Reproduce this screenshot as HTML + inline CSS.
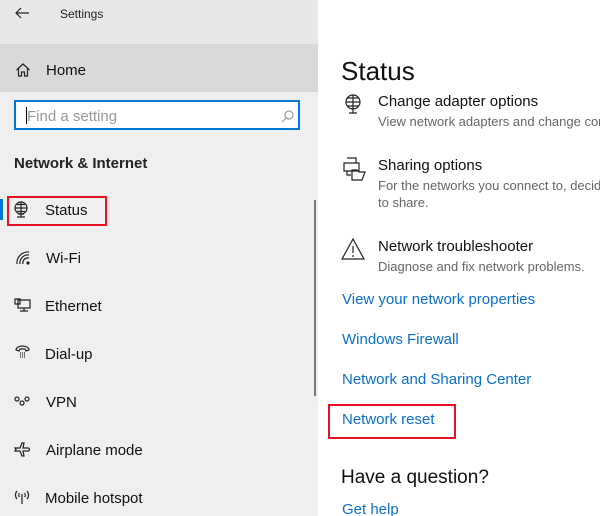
<!DOCTYPE html>
<html><head><style>
body{margin:0;width:600px;height:516px;overflow:hidden;position:relative;font-family:"Liberation Sans",sans-serif;background:#fff}
.a{position:absolute;white-space:nowrap}
#left{position:absolute;left:0;top:0;width:318px;height:516px;background:#efefef}
#right{position:absolute;left:318px;top:0;width:282px;height:516px;overflow:hidden}
.nav{font-size:15px;color:#111}
.link{font-size:15px;color:#0a6fcf}
.t{font-size:15px;color:#111}
.s{font-size:13px;color:#666}
svg{position:absolute;fill:none;stroke:#222;stroke-width:1.2}
</style></head><body>
<div id="left">
<div class="a" style="left:0;top:0;width:318px;height:44px;background:#e8e8e8"></div>
<div class="a" style="left:0;top:44px;width:318px;height:48px;background:#d9d9d9"></div>
<svg style="left:14px;top:6px" width="16" height="14"><path d="M15 7H2M7 2L2 7l5 5"/></svg>
<div class="a" style="left:60px;top:7px;font-size:12px;color:#222">Settings</div>
<svg style="left:15px;top:62px" width="16" height="16"><path d="M1.5 8L8 2l6.5 6M3.5 6.5V14h3v-4h3v4h3V6.5"/></svg>
<div class="a nav" style="left:46px;top:62px">Home</div>
<div class="a" style="left:14px;top:100px;width:286px;height:30px;border:2px solid #0078d7;background:#fff;box-sizing:border-box"></div>
<div class="a" style="left:26px;top:107px;width:1px;height:17px;background:#000"></div>
<div class="a" style="left:27px;top:108px;font-size:15px;color:#999">Find a setting</div>
<svg style="left:281px;top:110px;stroke:#999" width="13" height="13"><circle cx="8" cy="5" r="4"/><path d="M5 8l-4 4"/></svg>
<div class="a" style="left:14px;top:155px;font-size:15px;font-weight:bold;color:#222">Network &amp; Internet</div>
<div class="a" style="left:0;top:199px;width:3px;height:21px;background:#0078d7"></div>
<div class="a" style="left:7px;top:196px;width:100px;height:30px;border:2px solid #e81123;box-sizing:border-box"></div>
<svg style="left:13px;top:201px" width="17" height="18"><circle cx="8" cy="7" r="6"/><path d="M2 7h12M8 1v12M4 3.5h8M4 10.5h8M5 13h6M8 13v3M4 16h8"/></svg>
<div class="a nav" style="left:45px;top:202px">Status</div>
<svg style="left:16px;top:251px" width="14" height="14"><path d="M1 13a11 11 0 0 1 12-12M4 13a8 8 0 0 1 9-9M7 13a5 5 0 0 1 6-6"/><circle cx="12" cy="12" r="1" fill="#222"/></svg>
<div class="a nav" style="left:46px;top:250px">Wi-Fi</div>
<svg style="left:14px;top:298px" width="17" height="15"><path d="M4 2h12v8H4zM1 1h5v5H1zM10 10v3M6 13h8"/></svg>
<div class="a nav" style="left:45px;top:298px">Ethernet</div>
<svg style="left:15px;top:345px" width="15" height="14"><path d="M1 5a6.5 4 0 0 1 13 0l-3 1-1-2H5L4 6zM5 8h1M7 8h1M9 8h1M5 10h1M7 10h1M9 10h1M5 12h1M7 12h1M9 12h1"/></svg>
<div class="a nav" style="left:45px;top:346px">Dial-up</div>
<svg style="left:14px;top:396px" width="16" height="10"><circle cx="3" cy="3" r="2"/><circle cx="13" cy="3" r="2"/><circle cx="8" cy="7" r="2"/></svg>
<div class="a nav" style="left:46px;top:394px">VPN</div>
<svg style="left:14px;top:442px" width="16" height="16"><path d="M1 6h5l2-5h2l-1 5h5a1.5 1.5 0 0 1 0 3h-5l1 5H8L6 9H1l1-1.5z"/></svg>
<div class="a nav" style="left:46px;top:442px">Airplane mode</div>
<svg style="left:13px;top:489px" width="18" height="16"><path d="M9 5v10M4 2a6 6 0 0 0 0 8M14 2a6 6 0 0 1 0 8M6.5 4a3 3 0 0 0 0 4M11.5 4a3 3 0 0 1 0 4"/></svg>
<div class="a nav" style="left:45px;top:490px">Mobile hotspot</div>
<div class="a" style="left:314px;top:200px;width:2px;height:196px;background:#7a7a7a"></div>
</div>
<div id="right">
<div class="a" style="left:23px;top:56px;font-size:26px;color:#111">Status</div>
<svg style="left:25px;top:94px" width="21" height="21"><circle cx="10" cy="8" r="7"/><path d="M3 8h14M10 1v14M4.5 4h11M4.5 12h11M6 19h8M10 15v4"/></svg>
<div class="a t" style="left:60px;top:93px">Change adapter options</div>
<div class="a s" style="left:60px;top:114px">View network adapters and change connection settings.</div>
<svg style="left:24px;top:157px" width="24" height="24"><path d="M5 1h9v5M2 6h15v8H2zM5 14v4h4M10 13h5l2 2h6l-3 8H10z"/></svg>
<div class="a t" style="left:60px;top:157px">Sharing options</div>
<div class="a s" style="left:60px;top:178px">For the networks you connect to, decide what you want</div>
<div class="a s" style="left:60px;top:195px">to share.</div>
<svg style="left:23px;top:238px" width="24" height="22"><path d="M12 1L1 21h22zM12 8v7M12 17v2"/></svg>
<div class="a t" style="left:60px;top:238px">Network troubleshooter</div>
<div class="a s" style="left:60px;top:259px">Diagnose and fix network problems.</div>
<div class="a link" style="left:24px;top:291px">View your network properties</div>
<div class="a link" style="left:24px;top:331px">Windows Firewall</div>
<div class="a link" style="left:24px;top:371px">Network and Sharing Center</div>
<div class="a" style="left:10px;top:404px;width:128px;height:35px;border:2px solid #e81123;box-sizing:border-box"></div>
<div class="a link" style="left:24px;top:411px">Network reset</div>
<div class="a" style="left:23px;top:467px;font-size:19px;color:#111">Have a question?</div>
<div class="a link" style="left:24px;top:501px">Get help</div>
</div>
</body></html>
